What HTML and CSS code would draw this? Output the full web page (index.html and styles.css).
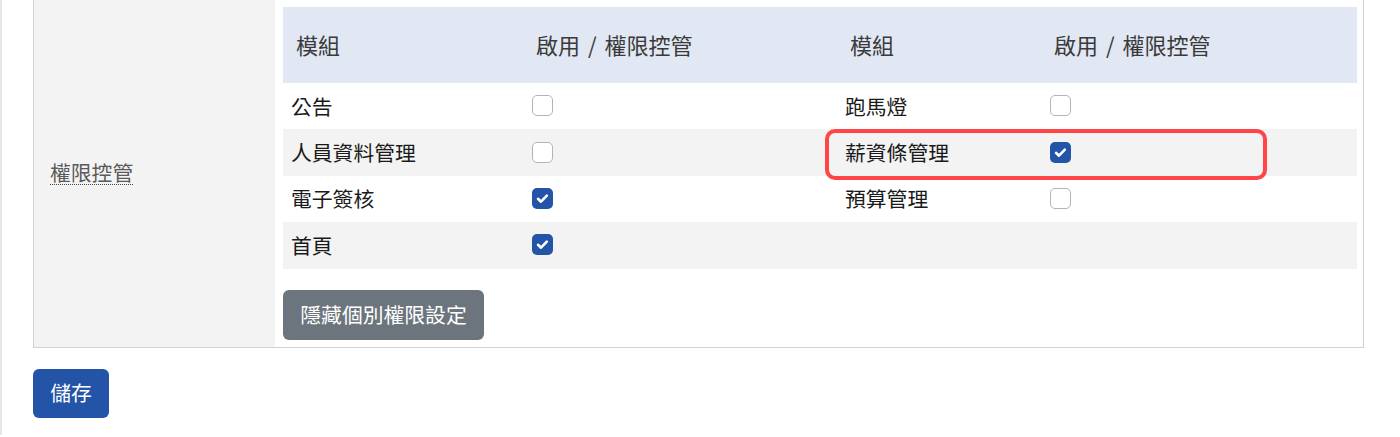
FILE: index.html
```html
<!DOCTYPE html>
<html lang="zh-Hant">
<head>
<meta charset="utf-8">
<title>權限控管</title>
<link rel="stylesheet" href="styles.css">
</head>
<body>
<div class="page">
  <div class="form-row">
    <div class="label-cell"><span class="label">權限控管</span></div>
    <div class="value-cell">
      <div class="perm-table">
        <div class="row head">
          <div class="th">模組</div>
          <div class="th">啟用 / 權限控管</div>
          <div class="th">模組</div>
          <div class="th">啟用 / 權限控管</div>
        </div>
        <div class="row">
          <div class="td">公告</div>
          <div class="td"><span class="cb"></span></div>
          <div class="td">跑馬燈</div>
          <div class="td"><span class="cb"></span></div>
        </div>
        <div class="row alt">
          <div class="td">人員資料管理</div>
          <div class="td"><span class="cb"></span></div>
          <div class="td">薪資條管理</div>
          <div class="td"><span class="cb checked"><svg viewBox="0 0 21 21" width="21" height="21"><path d="M6 10.8l3 2.9 5.8-6" fill="none" stroke="#fff" stroke-width="2.6" stroke-linecap="round" stroke-linejoin="round"/></svg></span></div>
        </div>
        <div class="row">
          <div class="td">電子簽核</div>
          <div class="td"><span class="cb checked"><svg viewBox="0 0 21 21" width="21" height="21"><path d="M6 10.8l3 2.9 5.8-6" fill="none" stroke="#fff" stroke-width="2.6" stroke-linecap="round" stroke-linejoin="round"/></svg></span></div>
          <div class="td">預算管理</div>
          <div class="td"><span class="cb"></span></div>
        </div>
        <div class="row alt">
          <div class="td">首頁</div>
          <div class="td"><span class="cb checked"><svg viewBox="0 0 21 21" width="21" height="21"><path d="M6 10.8l3 2.9 5.8-6" fill="none" stroke="#fff" stroke-width="2.6" stroke-linecap="round" stroke-linejoin="round"/></svg></span></div>
          <div class="td"></div>
          <div class="td"></div>
        </div>
        <div class="highlight"></div>
      </div>
      <button class="btn btn-gray" type="button">隱藏個別權限設定</button>
    </div>
  </div>
  <button class="btn btn-blue" type="button">儲存</button>
</div>
</body>
</html>
```
FILE: styles.css
```css
html, body {
  margin: 0;
  padding: 0;
  background: #fff;
}
body {
  font-family: "Noto Sans CJK TC", "Noto Sans", "Liberation Sans", sans-serif;
  color: #222;
  height: 437px;
  overflow: hidden;
}
.page {
  border-left: 2px solid #e6e6e6;
  padding-left: 31px;
  min-height: 437px;
  box-sizing: border-box;
}
.form-row {
  display: flex;
  width: 1331px;
  box-sizing: border-box;
  border: 1px solid #d2d2d2;
  margin-top: -2px;
}
.label-cell {
  width: 241px;
  flex: none;
  background: #f3f3f3;
  display: flex;
  align-items: center;
  padding-left: 16px;
  box-sizing: border-box;
}
.label {
  display: inline-block;
  font-size: 20.8px;
  line-height: 24px;
  color: #5a5a5a;
  border-bottom: 1px dotted #444;
}
.value-cell {
  flex: 1;
  padding: 8px 6px 7px 8px;
  background: #fff;
}
.perm-table {
  position: relative;
}
.row {
  display: grid;
  grid-template-columns: 240px 314px 204px 1fr;
  height: 46.4px;
  align-items: center;
}
.row.head {
  height: 76px;
  background: #e1e7f3;
}
.row.alt {
  background: #f3f3f3;
}
.th {
  padding-left: 13px;
  font-size: 22px;
  line-height: 30px;
  color: #3a3a3a;
  padding-bottom: 2px;
  word-spacing: 3px;
}
.td {
  padding-left: 8px;
  font-size: 20.8px;
  line-height: 30px;
  color: #1a1a1a;
  display: flex;
  align-items: center;
  padding-bottom: 1px;
}
.cb {
  display: inline-block;
  width: 21px;
  height: 21px;
  box-sizing: border-box;
  border: 1px solid #b4b4b4;
  border-radius: 5px;
  background: #fff;
  margin-left: 1px;
}
.cb.checked {
  border: none;
  background: #2354a8;
}
.cb svg {
  display: block;
}
.highlight {
  position: absolute;
  left: 542px;
  top: 122px;
  width: 442px;
  height: 51px;
  box-sizing: border-box;
  border: 4px solid #ff4545;
  border-radius: 10px;
  pointer-events: none;
}
.btn {
  font-family: "Noto Sans CJK TC", "Noto Sans", "Liberation Sans", sans-serif;
  font-size: 20.8px;
  line-height: 30px;
  color: #fff;
  border: none;
  border-radius: 6px;
  cursor: pointer;
  display: block;
  white-space: nowrap;
}
.btn-gray {
  margin-top: 21px;
  background: #6c757d;
  padding: 9px 0 11px;
  width: 201px;
  text-align: center;
}
.btn-blue {
  margin-top: 21px;
  background: #2354a8;
  padding: 8px 0 11px;
  width: 76px;
  text-align: center;
}
```
